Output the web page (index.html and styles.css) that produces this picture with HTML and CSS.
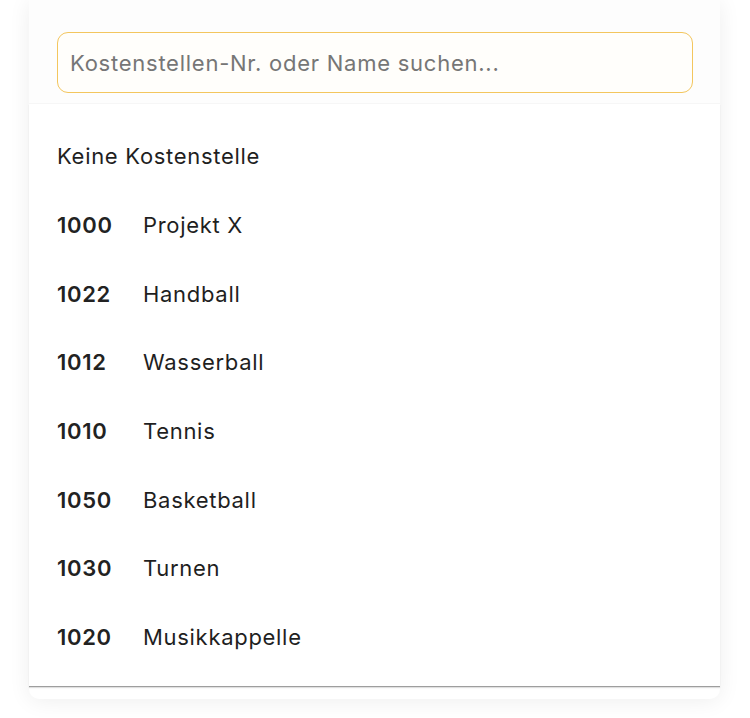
FILE: index.html
```html
<!DOCTYPE html>
<html lang="de">
<head>
<meta charset="utf-8">
<title>Kostenstelle</title>
<link rel="stylesheet" href="styles.css">
</head>
<body>
<div class="page">
  <div class="card">
    <div class="search-area">
      <input class="search" type="text" placeholder="Kostenstellen-Nr. oder Name suchen...">
    </div>
    <ul class="list">
      <li class="row"><span class="none">Keine Kostenstelle</span></li>
      <li class="row"><span class="num">1000</span><span class="name">Projekt X</span></li>
      <li class="row"><span class="num">1022</span><span class="name">Handball</span></li>
      <li class="row"><span class="num">1012</span><span class="name">Wasserball</span></li>
      <li class="row"><span class="num">1010</span><span class="name">Tennis</span></li>
      <li class="row"><span class="num">1050</span><span class="name">Basketball</span></li>
      <li class="row"><span class="num">1030</span><span class="name">Turnen</span></li>
      <li class="row"><span class="num">1020</span><span class="name">Musikkappelle</span></li>
    </ul>
    <div class="foot"></div>
  </div>
</div>
</body>
</html>
```
FILE: styles.css
```css
html, body {
  margin: 0;
  padding: 0;
  background: #ffffff;
}
body {
  font-family: Inter, "Noto Sans", "Liberation Sans", sans-serif;
  color: #1f1f1f;
}
.page {
  padding: 0 30px 18px 29px;
}
.card {
  background: #ffffff;
  border-radius: 0 0 10px 10px;
  box-shadow: 0 2px 22px rgba(0, 0, 0, 0.07);
}
.search-area {
  padding: 32px 27px 10px 28px;
  background: #fdfdfd;
  border-bottom: 1px solid #f6f6f6;
}
.search {
  display: block;
  box-sizing: border-box;
  width: 100%;
  height: 61px;
  margin: 0;
  padding: 0 12px;
  border: 1px solid #f3c65e;
  border-radius: 11px;
  background: #fffefb;
  font-family: inherit;
  font-size: 22px;
  letter-spacing: 0.75px;
  color: #1f1f1f;
  outline: none;
}
.search::placeholder {
  color: #767676;
}
.list {
  list-style: none;
  margin: 0;
  padding: 18px 28px 14px 28px;
  border-bottom: 1px solid #9e9e9e;
  box-shadow: 0 1px 1px rgba(0, 0, 0, 0.12);
}
.row {
  display: flex;
  align-items: center;
  height: 68.7px;
  font-size: 22px;
  letter-spacing: 0.7px;
  line-height: 30px;
}
.num {
  width: 86px;
  font-weight: 600;
  color: #222222;
}
.name {
  color: #1f1f1f;
}
.foot {
  height: 12px;
}
```
